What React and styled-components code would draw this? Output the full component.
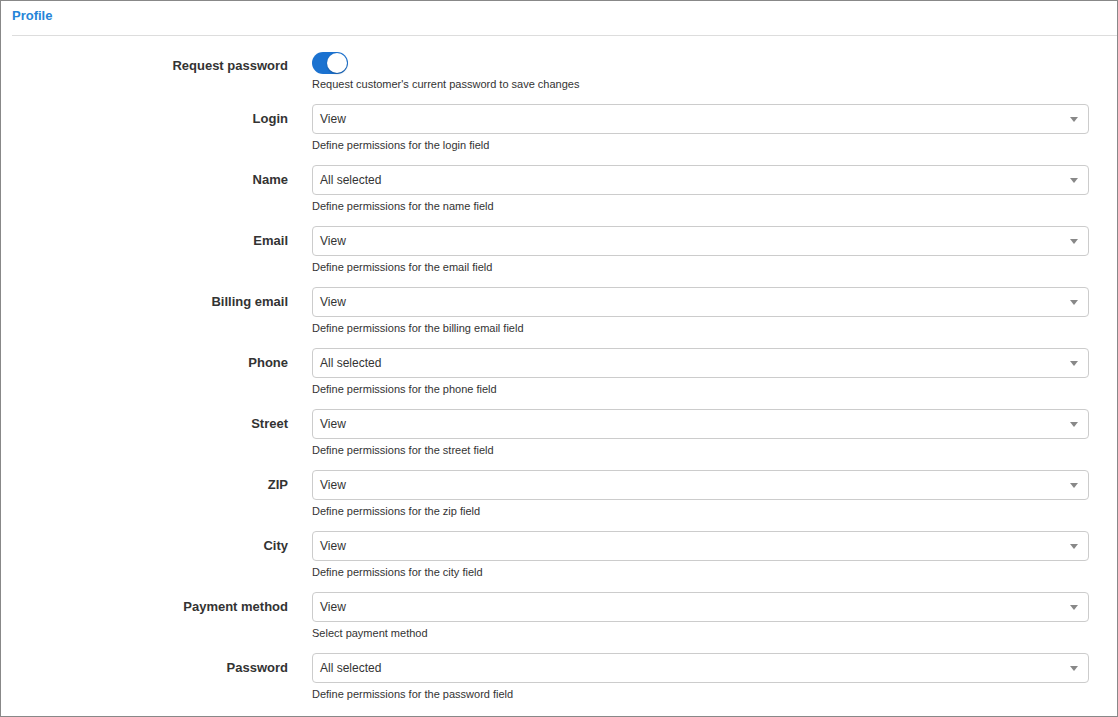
import React from 'react'
import styled, { createGlobalStyle } from 'styled-components'

const rows = [
  { label: 'Login', value: 'View', help: 'Define permissions for the login field' },
  { label: 'Name', value: 'All selected', help: 'Define permissions for the name field' },
  { label: 'Email', value: 'View', help: 'Define permissions for the email field' },
  { label: 'Billing email', value: 'View', help: 'Define permissions for the billing email field' },
  { label: 'Phone', value: 'All selected', help: 'Define permissions for the phone field' },
  { label: 'Street', value: 'View', help: 'Define permissions for the street field' },
  { label: 'ZIP', value: 'View', help: 'Define permissions for the zip field' },
  { label: 'City', value: 'View', help: 'Define permissions for the city field' },
  { label: 'Payment method', value: 'View', help: 'Select payment method' },
  { label: 'Password', value: 'All selected', help: 'Define permissions for the password field' }
]

export default function App () {
  return (
    <>
      <GlobalStyle />
      <Card>
        <Header>Profile</Header>
        <Form>
          <Row>
            <Label $top={6}>Request password</Label>
            <Field>
              <Toggle><Knob /></Toggle>
              <Help $gap={3}>Request customer's current password to save changes</Help>
            </Field>
          </Row>
          {rows.map(row => (
            <Row key={row.label}>
              <Label>{row.label}</Label>
              <Field>
                <Select>
                  <span>{row.value}</span>
                  <Caret />
                </Select>
                <Help>{row.help}</Help>
              </Field>
            </Row>
          ))}
        </Form>
      </Card>
    </>
  )
}

const GlobalStyle = createGlobalStyle`
  body {
    margin: 0;
    font-family: "Liberation Sans", Arial, sans-serif;
    color: #333;
    background: #fff;
  }
`

const Card = styled.div`
  box-sizing: border-box;
  width: 1118px;
  height: 717px;
  border: 1px solid #888;
  padding-left: 11px;
`

const Header = styled.div`
  height: 34px;
  line-height: 30px;
  font-size: 13px;
  font-weight: bold;
  color: #2585d8;
  border-bottom: 1px solid #ddd;
`

const Form = styled.div`
  display: flex;
  flex-direction: column;
  gap: 13px;
  padding-top: 16px;
`

const Row = styled.div`
  display: grid;
  grid-template-columns: 276px 777px;
  column-gap: 24px;
`

const Label = styled.div`
  text-align: right;
  font-size: 13px;
  font-weight: bold;
  line-height: ${p => p.$top ? '16px' : '30px'};
  padding-top: ${p => p.$top || 0}px;
  color: #333;
`

const Field = styled.div`
  display: flex;
  flex-direction: column;
  align-items: flex-start;
`

const Toggle = styled.div`
  box-sizing: border-box;
  width: 36px;
  height: 22px;
  border-radius: 11px;
  background: #1b72d0;
  padding: 1px;
  display: flex;
  justify-content: flex-end;
`

const Knob = styled.div`
  width: 20px;
  height: 20px;
  border-radius: 50%;
  background: #fff;
  box-shadow: 0 1px 2px rgba(0, 0, 0, 0.25);
`

const Select = styled.div`
  box-sizing: border-box;
  width: 777px;
  height: 30px;
  border: 1px solid #ccc;
  border-radius: 4px;
  padding: 0 10px 0 7px;
  display: flex;
  align-items: center;
  justify-content: space-between;
  font-size: 12px;
  color: #333;
`

const Caret = styled.span`
  width: 0;
  height: 0;
  border-left: 4.5px solid transparent;
  border-right: 4.5px solid transparent;
  border-top: 5px solid #888;
`

const Help = styled.div`
  margin-top: ${p => p.$gap || 4}px;
  font-size: 11px;
  line-height: 14px;
  color: #333;
`
